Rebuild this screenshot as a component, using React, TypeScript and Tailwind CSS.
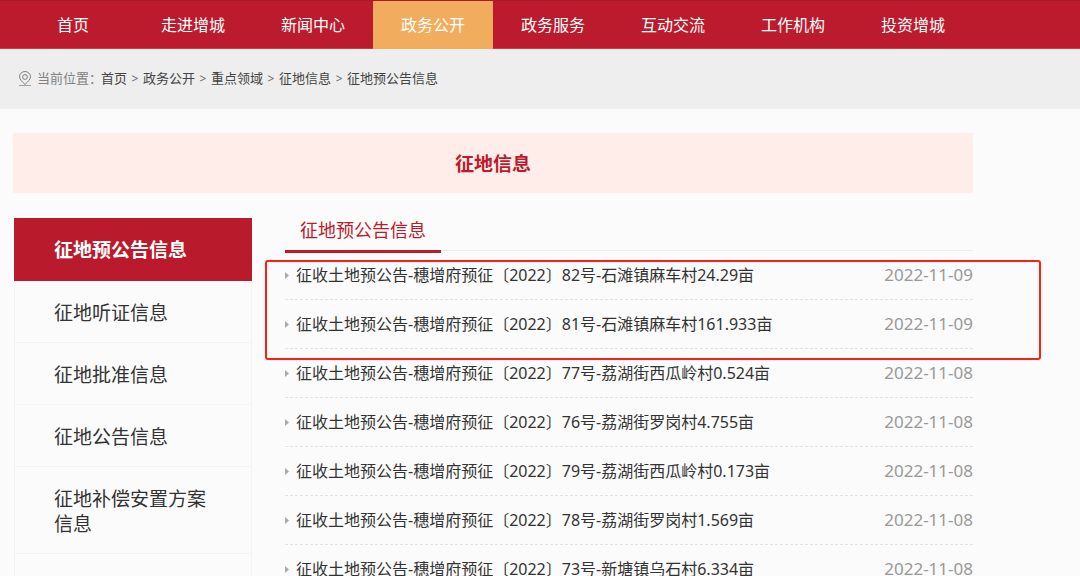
const navItems = ['首页', '走进增城', '新闻中心', '政务公开', '政务服务', '互动交流', '工作机构', '投资增城'];
const activeNav = '政务公开';

const crumbs = ['首页', '政务公开', '重点领域', '征地信息', '征地预公告信息'];

const sideItems = ['征地听证信息', '征地批准信息', '征地公告信息', '征地补偿安置方案信息'];

const notices = [
  { title: '征收土地预公告-穗增府预征〔2022〕82号-石滩镇麻车村24.29亩', date: '2022-11-09' },
  { title: '征收土地预公告-穗增府预征〔2022〕81号-石滩镇麻车村161.933亩', date: '2022-11-09' },
  { title: '征收土地预公告-穗增府预征〔2022〕77号-荔湖街西瓜岭村0.524亩', date: '2022-11-08' },
  { title: '征收土地预公告-穗增府预征〔2022〕76号-荔湖街罗岗村4.755亩', date: '2022-11-08' },
  { title: '征收土地预公告-穗增府预征〔2022〕79号-荔湖街西瓜岭村0.173亩', date: '2022-11-08' },
  { title: '征收土地预公告-穗增府预征〔2022〕78号-荔湖街罗岗村1.569亩', date: '2022-11-08' },
  { title: '征收土地预公告-穗增府预征〔2022〕73号-新塘镇乌石村6.334亩', date: '2022-11-08' },
];

function PinIcon() {
  return (
    <svg className="h-4 w-[14px] shrink-0" viewBox="0 0 14 16" fill="none" stroke="#808080" aria-hidden="true">
      <path d="M7 13.5 C4 10.5 1.5 8.4 1.5 5.7 A5.5 5.2 0 0 1 12.5 5.7 C12.5 8.4 10 10.5 7 13.5 Z" />
      <circle cx="7" cy="6" r="2.4" />
      <path d="M1 14.5 H13" strokeOpacity="0.7" />
    </svg>
  );
}

function NavBar() {
  return (
    <nav className="border-t border-b border-t-[#a91a2b] border-b-[#c93a4a] bg-[#bb1b2c]">
      <ul className="flex pl-[13px]">
        {navItems.map((item) => (
          <li key={item} className="h-[47px] w-[120px]">
            <a
              href="#"
              className={
                item === activeNav
                  ? 'block h-12 bg-[#f1ad5d] text-center text-base leading-[48px] text-white'
                  : 'block h-12 text-center text-base leading-[48px] text-white'
              }
            >
              {item}
            </a>
          </li>
        ))}
      </ul>
    </nav>
  );
}

function Breadcrumb() {
  return (
    <div className="flex h-[60px] items-center bg-[#eeeeee] pl-[18px] text-[13px] text-[#444]">
      <PinIcon />
      <span className="ml-[5px] w-16 whitespace-nowrap text-[#808080]">当前位置：</span>
      <ol className="flex">
        {crumbs.map((crumb, i) => (
          <li key={crumb} className="flex">
            {i > 0 && <span className="w-4 text-center text-xs leading-[22px] text-[#666]">&gt;</span>}
            <a href="#" className="leading-5">{crumb}</a>
          </li>
        ))}
      </ol>
    </div>
  );
}

function Sidebar() {
  return (
    <aside className="ml-px w-[238px] shrink-0 text-[19px] leading-[25px]">
      <h2 className="bg-[#b91b2c] pt-5 pb-[18px] pl-10 font-bold text-white">征地预公告信息</h2>
      <ul className="border-x border-[#f3f3f3]">
        {sideItems.map((item) => (
          <li key={item} className="border-b border-[#f3f3f3]">
            <a href="#" className="block pt-5 pr-10 pb-4 pl-[39px] text-[#333]">{item}</a>
          </li>
        ))}
        <li className="h-16" />
      </ul>
    </aside>
  );
}

function NoticeList() {
  return (
    <section className="min-w-0 flex-1">
      <div className="flex h-[33px] border-b border-[#ececec]">
        <h3 className="h-[35px] border-b-[3px] border-[#bb1b2c] px-[15px] text-lg leading-6 text-[#bb1b2c]">征地预公告信息</h3>
      </div>
      <div className="relative">
        <ul>
          {notices.map((notice) => (
            <li key={notice.title} className="flex h-[49px] items-center border-b border-dashed border-[#e2e2e2]">
              <svg className="mr-[7px] h-[7px] w-1 shrink-0" viewBox="0 0 4 7" fill="#aaaaaa" aria-hidden="true">
                <path d="M0 0 L4 3.5 L0 7 Z" />
              </svg>
              <a href="#" className="flex-1 whitespace-nowrap text-base text-[#333]">{notice.title}</a>
              <time className="text-[17px] text-[#999]">{notice.date}</time>
            </li>
          ))}
        </ul>
        <div className="pointer-events-none absolute top-[9px] -right-[68px] -left-5 h-[100px] rounded-[3px] border-2 border-[#fb2015]" />
      </div>
    </section>
  );
}

export default function App() {
  return (
    <div className="h-screen overflow-hidden bg-[#fbfbfb] font-['Noto_Sans','Noto_Sans_CJK_SC',sans-serif]">
      <NavBar />
      <Breadcrumb />
      <main className="mr-[107px] ml-[13px] pt-6">
        <h1 className="h-[60px] bg-[#ffede9] text-center text-[19px] leading-[62px] font-bold text-[#bb1b2c]">征地信息</h1>
        <div className="mt-[25px] flex gap-[33px]">
          <Sidebar />
          <NoticeList />
        </div>
      </main>
    </div>
  );
}
